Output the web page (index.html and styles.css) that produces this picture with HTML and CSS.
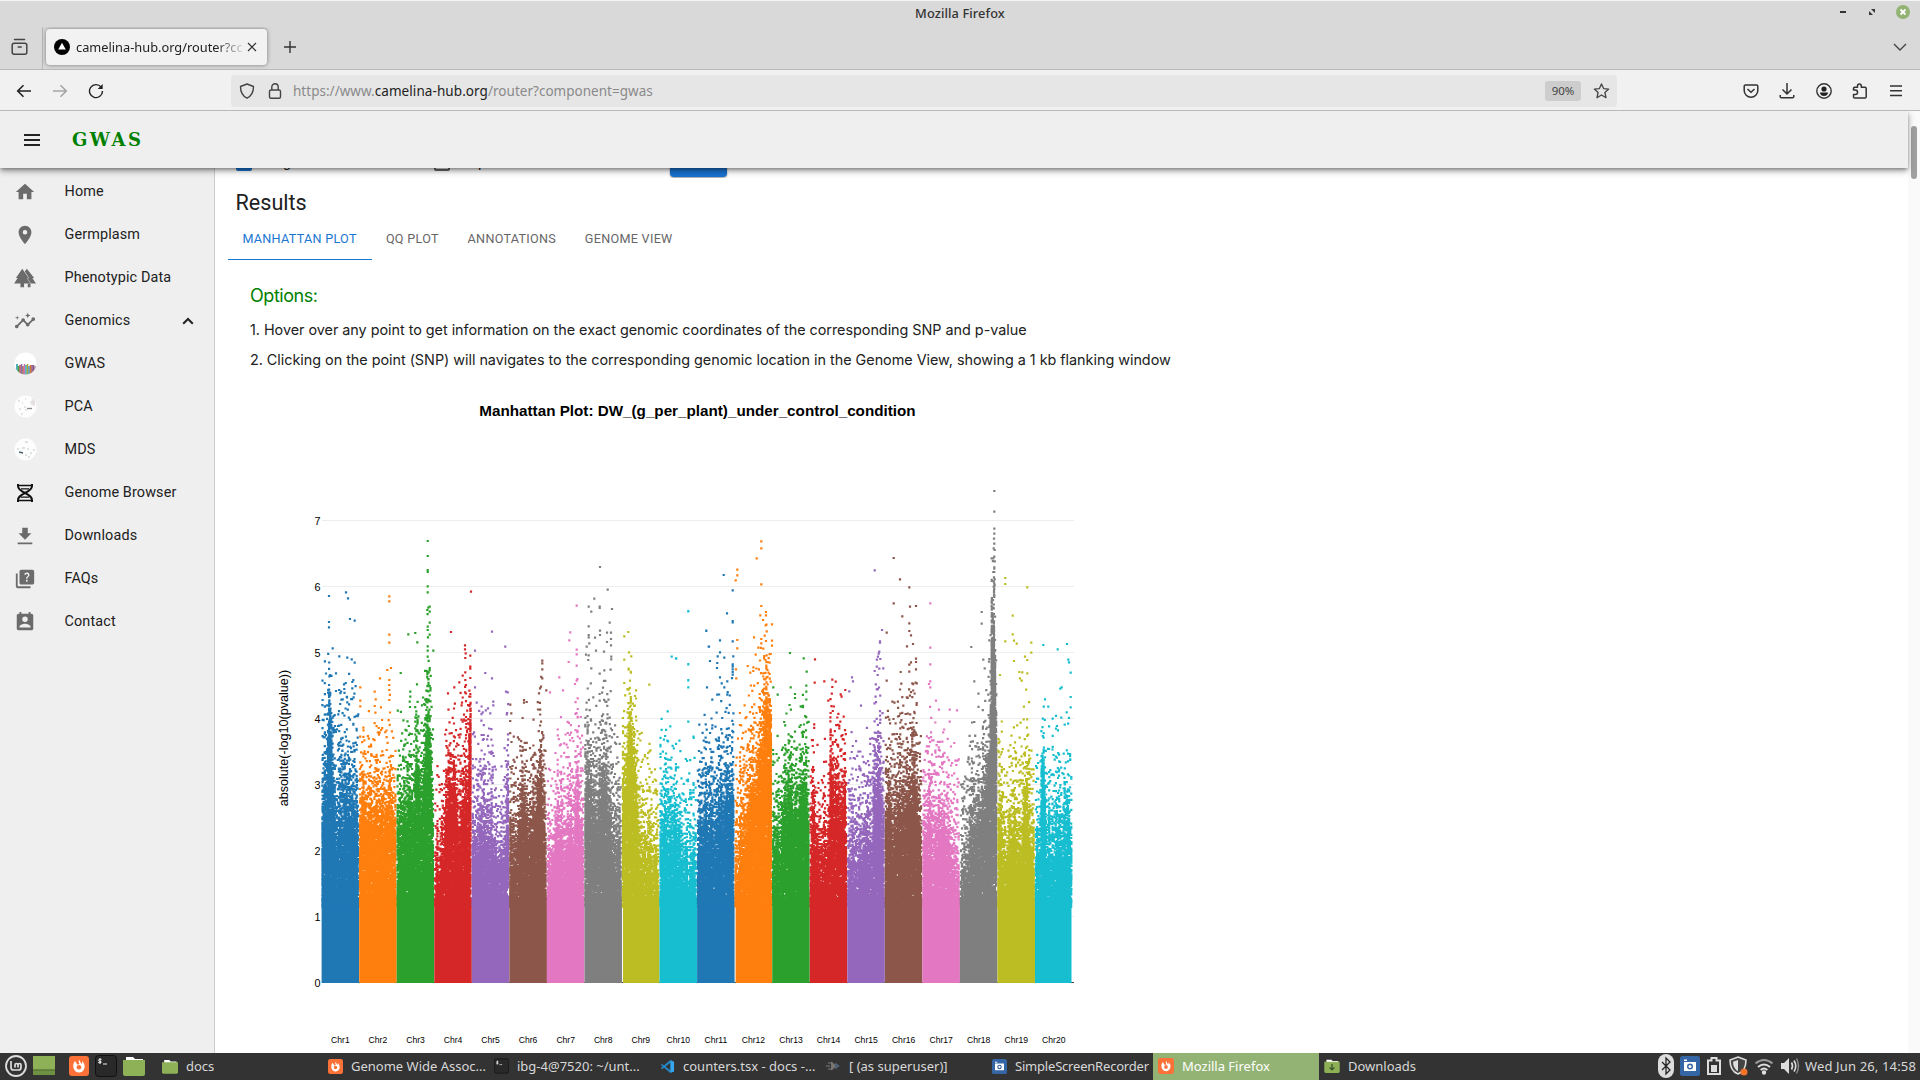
FILE: index.html
```html
<!DOCTYPE html>
<html lang="en">
<head>
<meta charset="utf-8">
<title>Mozilla Firefox</title>
<link rel="stylesheet" href="styles.css">
</head>
<body>
<div class="screen">
  <header class="titlebar">
    <span class="title">Mozilla Firefox</span>
    <div class="winbtns">
      <svg width="10" height="12" viewBox="0 0 10 12"><path d="M2 5h6v2H2z" fill="#333"/></svg>
      <svg width="10" height="12" viewBox="0 0 10 12"><path d="M4 3h4v4zM2 5v4h4z" fill="#333"/></svg>
      <svg width="14" height="14" viewBox="0 0 14 14"><circle cx="7" cy="7" r="7" fill="#92b372"/><path d="M4.5 4.5l5 5m0-5l-5 5" stroke="#fff" stroke-width="1.8"/></svg>
    </div>
  </header>
  <div class="tabbar">
    <div class="view"><svg width="18" height="18" viewBox="0 0 18 18" fill="none" stroke="#444" stroke-width="1.5" stroke-linecap="round"><rect x="1.2" y="5.2" width="14.6" height="11" rx="2"/><path d="M3.5 1.6h10M7.2 9h3"/></svg></div>
    <div class="tab">
      <svg width="16" height="16" viewBox="0 0 16 16"><circle cx="8" cy="8" r="8" fill="#000"/><path d="M8 3.8l3.8 6.7H4.2z" fill="#fff"/></svg>
      <span class="tabtext">camelina-hub.org/router?co</span>
      <svg class="close" width="10" height="10" viewBox="0 0 10 10"><path d="M1 1l8 8M9 1L1 9" stroke="#333" stroke-width="1.2"/></svg>
    </div>
    <svg class="plus" width="12" height="12" viewBox="0 0 12 12"><path d="M6 0v12M0 6h12" stroke="#333" stroke-width="1.4"/></svg>
    <svg class="chev" width="14" height="8" viewBox="0 0 14 8"><path d="M1 1l6 6 6-6" fill="none" stroke="#444" stroke-width="1.4"/></svg>
  </div>
  <div class="navbar">
    <div class="navleft">
      <svg width="16" height="16" viewBox="0 0 16 16" fill="none" stroke="#222" stroke-width="1.6"><path d="M15 8H2M7.5 2.2L1.7 8l5.8 5.8"/></svg>
      <svg width="16" height="16" viewBox="0 0 16 16" fill="none" stroke="#a5a5a5" stroke-width="1.6"><path d="M1 8h13M8.500 2.200L14.300 8l-5.800 5.800"/></svg>
      <svg width="16" height="16" viewBox="0 0 16 16" fill="none" stroke="#222" stroke-width="1.4"><path d="M13.200 4.200A6.500 6.500 0 1 0 14.500 8"/><path d="M14.700 1V6H9.700z" fill="#222" stroke="none"/></svg>
    </div>
    <div class="urlbar">
      <svg width="16" height="16" viewBox="0 0 16 16" fill="none" stroke="#444" stroke-width="1.4"><path d="M8 1L14.500 3.500C14.500 9 12.500 13 8 15.200 3.500 13 1.500 9 1.500 3.500z" stroke-linejoin="round"/></svg>
      <svg width="16" height="16" viewBox="0 0 16 16" fill="none" stroke="#444" stroke-width="1.4"><rect x="2.500" y="7" width="11" height="8.300" rx="1.500"/><path d="M4.800 7V4a3.200 3.200 0 0 1 6.400 0v3"/></svg>
      <span class="url">https://www.<b>camelina-hub.org</b>/router?component=gwas</span>
      <span class="zoom">90%</span>
      <svg width="17" height="16" viewBox="0 0 16 16" fill="none" stroke="#444" stroke-width="1.300" stroke-linejoin="round"><path d="M8 .9l2.100 4.700 5.100.5-3.800 3.400 1.100 5.200L8 12l-4.500 2.700 1.100-5.200L.8 6.100l5.100-.5z"/></svg>
    </div>
    <div class="navright">
      <svg width="16" height="16" viewBox="0 0 16 16" fill="none" stroke="#333" stroke-width="1.500"><path d="M2.500 2h11q1.300 0 1.300 1.300V7.500a6.800 6.800 0 0 1-13.600 0V3.300Q1.200 2 2.500 2z"/><path d="M4.500 6L8 9.300 11.500 6"/></svg>
      <svg width="16" height="16" viewBox="0 0 16 16" fill="none" stroke="#333" stroke-width="1.500"><path d="M8 0v11M3.500 6.500L8 11l4.500-4.500M1.200 12v1.500q0 1.300 1.300 1.300h11q1.300 0 1.300-1.300V12"/></svg>
      <svg width="16" height="16" viewBox="0 0 16 16"><circle cx="8" cy="8" r="7.200" fill="none" stroke="#333" stroke-width="1.400"/><circle cx="8" cy="6" r="2.600" fill="#222"/><path d="M3.800 9.500h8.400q-.8 3.500-4.200 3.500t-4.200-3.500z" fill="#222"/></svg>
      <svg width="16" height="16" viewBox="0 0 16 16" fill="none" stroke="#333" stroke-width="1.500" stroke-linejoin="round"><path d="M1.500 7V5.500q0-1.200 1.200-1.200h2.800V3a1.900 1.900 0 0 1 3.800 0v1.300H13q1.200 0 1.200 1.200v8.300q0 1.300-1.200 1.300H2.700q-1.200 0-1.200-1.300V11.500h1.800a2.200 2.200 0 0 0 0-4.500z"/></svg>
      <svg width="16" height="16" viewBox="0 0 16 16" stroke="#333" stroke-width="1.400"><path d="M2 3h12M2 7.700h12M2 12.500h12"/></svg>
    </div>
  </div>
  <div class="viewport">
    <div class="app">
      <div class="appbar">
        <svg width="18" height="14" viewBox="0 0 18 14"><path d="M1 2h16M1 7h16M1 12h16" stroke="#222" stroke-width="2"/></svg>
        <h1>GWAS</h1>
      </div>
      <div class="body">
        <nav class="side">
          <a><svg width="22" height="22" viewBox="0 0 24 24"><path d="M10 20v-6h4v6h5v-8h3L12 3 2 12h3v8z"/></svg>Home</a>
          <a><svg width="22" height="22" viewBox="0 0 24 24"><path d="M12 2C8.130 2 5 5.130 5 9c0 5.250 7 13 7 13s7-7.750 7-13c0-3.870-3.130-7-7-7zm0 9.500a2.500 2.500 0 0 1 0-5 2.500 2.500 0 0 1 0 5z"/></svg>Germplasm</a>
          <a><svg width="22" height="22" viewBox="0 0 24 24"><path d="M17 12h2L12 2 5.050 12H7l-3.900 6h6.920v4h3.960v-4H21l-4-6z" transform="translate(-3 0)"/><path d="M14 2l8 10h-2l4 6h-6v4h-3v-4h3.500l-4-6h2l-4.700-7z"/></svg>Phenotypic Data</a>
          <a><svg width="22" height="22" viewBox="0 0 24 24"><path d="M21 8c-1.450 0-2.260 1.440-1.930 2.510l-3.550 3.560c-.3-.09-.74-.09-1.040 0l-2.550-2.550C12.270 10.450 11.460 9 10 9c-1.450 0-2.270 1.440-1.930 2.520l-4.560 4.550C2.440 15.740 1 16.550 1 18c0 1.100.9 2 2 2 1.450 0 2.260-1.440 1.930-2.510l4.550-4.560c.3.090.74.090 1.040 0l2.550 2.550C12.730 16.550 13.540 18 15 18c1.450 0 2.270-1.440 1.930-2.520l3.560-3.550C21.560 12.260 23 11.450 23 10c0-1.100-.9-2-2-2z"/><path d="M15 9l.94-2.070L18 6l-2.060-.93L15 3l-.92 2.070L12 6l2.080.93zM3.500 11L4 9l2-.5L4 8l-.5-2L3 8l-2 .5L3 9z"/></svg>Genomics<svg class="up" width="12" height="8" viewBox="0 0 12 8"><path d="M1.200 6.800L6 2l4.800 4.800" fill="none" stroke="#222" stroke-width="2"/></svg></a>
          <a><svg class="round" width="23" height="23" viewBox="0 0 23 23"><defs><clipPath id="c"><circle cx="11.500" cy="11.500" r="11"/></clipPath></defs><g clip-path="url(#c)"><path d="M0 0h23v23H0z" fill="#fff"/><g stroke-width="1.500"><path d="M3 12v11" stroke="#1797a0"/><path d="M4.500 14v9" stroke="#4aa34a"/><path d="M6 13v10" stroke="#b04a4a"/><path d="M7.500 12v11" stroke="#8b6bb0"/><path d="M9 14v9" stroke="#a05a4a"/><path d="M10.500 12v11" stroke="#d070b0"/><path d="M12 13v10" stroke="#28a8b8"/><path d="M13.500 12v11" stroke="#a8a830"/><path d="M15 14v9" stroke="#408bc0"/><path d="M16.500 13v10" stroke="#d07830"/><path d="M18 13v10" stroke="#994a70"/><path d="M19.500 13v10" stroke="#735a90"/><path d="M21 14v9" stroke="#b080a0"/></g></g></svg>GWAS</a>
          <a><svg class="round" width="23" height="23" viewBox="0 0 23 23"><circle cx="11.500" cy="11.500" r="11" fill="#fdfdfd"/><path d="M4 6h2m2 2h1m2-4h1M5 14h2m3-2h2m-1 3h2m-6 4h2m7-12h2" stroke="#ccc"/><path d="M13 13.500h5" stroke="#888" stroke-width="1.300"/><path d="M18 3l3 3v5l-4-1z" fill="#e6dfdf"/></svg>PCA</a>
          <a><svg class="round" width="23" height="23" viewBox="0 0 23 23"><circle cx="11.500" cy="11.500" r="11" fill="#fdfdfd"/><path d="M11 4h3m-6 6h3m2 1h2m1 4h2m-4 4h2m-5-2h2m6-5h2M3 11h2" stroke="#bcc6cc"/><path d="M5 14l4 1" stroke="#4b5f6d" stroke-width="1.700"/></svg>MDS</a>
          <a><svg class="dna" width="18" height="20" viewBox="0 0 18 20" fill="none" stroke="#111" stroke-width="2"><path d="M2 1v2c0 7 14 7 14 14v2M16 1v2c0 7-14 7-14 14v2"/><path d="M3 2.500h12M5 5.800h8M5 14.200h8M3 17.500h12" stroke-width="1.300"/></svg>Genome Browser</a>
          <a><svg width="22" height="22" viewBox="0 0 24 24"><path d="M19 9h-4V3H9v6H5l7 7 7-7zM4 19v2h16v-2z"/></svg>Downloads</a>
          <a><svg width="22" height="22" viewBox="0 0 24 24"><path fill-rule="evenodd" d="M4 6H2v14c0 1.100.9 2 2 2h14v-2H4V6zm16-4H8c-1.100 0-2 .9-2 2v12c0 1.100.9 2 2 2h12c1.100 0 2-.9 2-2V4c0-1.100-.9-2-2-2zm-5.990 13c-.59 0-1.050-.47-1.050-1.050 0-.59.47-1.040 1.050-1.040.59 0 1.040.45 1.040 1.040-.01.580-.450 1.050-1.040 1.050zm2.500-6.170c-.63.930-1.230 1.210-1.560 1.810-.13.240-.18.400-.18 1.180h-1.520c0-.41-.06-1.080.26-1.650.41-.73 1.180-1.160 1.630-1.800.48-.68.210-1.940-1.140-1.940-.88 0-1.320.67-1.500 1.230l-1.370-.57C11.510 5.960 12.520 5 13.990 5c1.230 0 2.080.56 2.510 1.260.37.6.58 1.730.01 2.570z"/></svg>FAQs</a>
          <a><svg width="22" height="22" viewBox="0 0 24 24"><path fill-rule="evenodd" d="M19 3h-1V1h-2v2H8V1H6v2H5c-1.110 0-2 .9-2 2v14c0 1.100.89 2 2 2h14c1.100 0 2-.9 2-2V5c0-1.100-.9-2-2-2zm-7 3a3 3 0 0 1 0 6 3 3 0 0 1 0-6zm6 12H6v-1c0-2 4-3.100 6-3.100s6 1.100 6 3.100z"/></svg>Contact</a>
        </nav>
        <main class="content">
          <div class="peek"><i class="cb on"></i><span class="t1">g</span><i class="cb"></i><span class="t2">p</span><i class="btn"></i></div>
          <h2>Results</h2>
          <div class="tabs"><span class="active">MANHATTAN PLOT</span><span>QQ PLOT</span><span>ANNOTATIONS</span><span>GENOME VIEW</span></div>
          <div class="options">
            <h3>Options:</h3>
            <p>1. Hover over any point to get information on the exact genomic coordinates of the corresponding SNP and p-value</p>
            <p>2. Clicking on the point (SNP) will navigates to the corresponding genomic location in the Genome View, showing a 1 kb flanking window</p>
          </div>
          <svg id="plot" class="plot" width="860" height="667" viewBox="250 386 860 667"></svg>
        </main>
      </div>
    </div>
    <div class="scroll"><i></i></div>
  </div>
  <footer class="taskbar">
    <div class="launch">
      <svg width="22" height="22" viewBox="0 0 22 22" fill="none" stroke="#ddd"><circle cx="11" cy="11" r="10" stroke-width="1.800"/><path d="M6 6v6.500q0 2.500 2.500 2.500h5q2.500 0 2.500-2.500V10q0-1.500-1.500-1.500T13 10v2.500M13 10q0-1.500-1.500-1.500T10 10v2.500" stroke-width="1.700"/></svg>
      <svg class="desk" width="22" height="20" viewBox="0 0 22 20"><path d="M0 0h22v19H0z" fill="#8eb158"/><path d="M0 14.500h22V19H0z" fill="#6f9142"/><path d="M0 14h22" stroke="#42582a"/></svg>
      <svg class="ff" width="20" height="20" viewBox="0 0 20 20"><use href="#fox"/></svg>
      <svg width="22" height="22" viewBox="0 0 22 22"><use href="#term"/></svg>
      <svg width="22" height="20" viewBox="0 0 22 20"><use href="#fold"/></svg>
    </div>
    <div class="task"><svg width="16" height="15" viewBox="0 0 22 20"><use href="#fold"/></svg><span>docs</span></div>
    <div class="task"><svg width="15" height="15" viewBox="0 0 20 20"><use href="#fox"/></svg><span>Genome Wide Assoc...</span></div>
    <div class="task"><svg width="15" height="16" viewBox="0 0 22 22"><use href="#term"/></svg><span>ibg-4@7520: ~/unt...</span></div>
    <div class="task"><svg width="15" height="15" viewBox="0 0 16 16"><path d="M11 1v14L1 6.500l1.200-1.300L11 12V4L2.200 10.800 1 9.500z" fill="#2489ca"/><path d="M11 1l4 1.800v10.400L11 15z" fill="#35a6f0"/></svg><span>counters.tsx - docs -...</span></div>
    <div class="task"><svg width="15" height="14" viewBox="0 0 15 14"><path d="M0 7h4M2 4h5M2 10h5" stroke="#666" stroke-width="1.500"/><path d="M5 2.500l4 3v3l-4 3z" fill="#7b7572"/><path d="M9 3.500l5 3.500-5 3.500z" fill="#4e6176"/></svg><span>[ (as superuser)]</span></div>
    <div class="task"><svg width="15" height="15" viewBox="0 0 20 20"><use href="#cam"/></svg><span class="tight">SimpleScreenRecorder</span></div>
    <div class="task on"><svg width="16" height="16" viewBox="0 0 20 20"><use href="#fox"/></svg><span>Mozilla Firefox</span></div>
    <div class="task"><svg width="16" height="14" viewBox="0 0 22 20"><use href="#fold"/><path d="M11 7v8M7.500 12l3.500 3.500 3.500-3.500" stroke="#40592b" fill="none" stroke-width="2"/></svg><span>Downloads</span></div>
    <div class="tray">
      <svg width="16" height="24" viewBox="0 0 16 24"><rect width="16" height="24" rx="8" fill="#ddd"/><path d="M4 8l8 8-4 4V4l4 4-8 8" fill="none" stroke="#222" stroke-width="1.300"/></svg>
      <svg width="20" height="20" viewBox="0 0 20 20"><use href="#cam"/></svg>
      <svg width="16" height="20" viewBox="0 0 16 20"><path d="M5.500 2h5v2.500H14V18H2V4.500h3.500z" fill="none" stroke="#ddd" stroke-width="2"/><path d="M5 9h6v7H5z" fill="#ddd"/></svg>
      <svg width="20" height="20" viewBox="0 0 20 20"><path d="M10 1l8 3q0 11-8 14Q2 15 2 4z" fill="#444" stroke="#ddd" stroke-width="1.600"/><path d="M10 4l-5 1.800q0 6.500 5 9.500z" fill="#ddd"/><circle cx="16" cy="16" r="3.500" fill="#f37329"/></svg>
      <svg width="20" height="18" viewBox="0 0 20 18" fill="none" stroke="#ddd" stroke-width="2"><path d="M1.500 6.500q8.500-7 17 0" stroke="#999"/><path d="M4 10q6-5 12 0M6.700 13q3.300-3 6.600 0"/><circle cx="10" cy="15.500" r="1.200" fill="#ddd"/></svg>
      <svg width="20" height="18" viewBox="0 0 20 18"><path d="M1 6h3l5-5v16l-5-5H1z" fill="#ddd"/><path d="M11.500 5.500q2 3.500 0 7M14 3.500q3.500 5.500 0 11" stroke="#ddd" stroke-width="1.600" fill="none"/><path d="M16.500 1.500q4 7.500 0 15" stroke="#888" stroke-width="1.500" fill="none"/></svg>
      <span class="clock">Wed Jun 26, 14:58</span>
    </div>
  </footer>
</div>
<svg class="defs" width="0" height="0"><defs>
  <g id="fox"><rect width="20" height="20" rx="3" fill="#fb7137"/><path d="M6 5Q3.500 8 4.500 12q1.500 4.500 5.500 4.500t5.500-4.500Q16.300 8 13 5q.5 2-.5 3L10 3.500Q9 6 10.500 8l-2 .8z" fill="#fff"/><circle cx="10" cy="11.200" r="2.300" fill="#fb7137"/></g>
  <g id="term"><rect x=".5" y=".5" width="21" height="21" rx="3" fill="#292929" stroke="#111"/><path d="M6.500 4.500q-3-.8-3 .7t2.500 1.300q1.500 1.700-2.800 1.100M5 3v6M8 9h4" stroke="#eee" fill="none"/></g>
  <g id="fold"><path d="M3 1h7l2 2h8v4H3z" fill="#fff"/><path d="M0 4h22v14q0 2-2 2H2q-2 0-2-2z" fill="#8eb158"/></g>
  <g id="cam"><rect width="20" height="20" rx="2.500" fill="#3465a4"/><path d="M4 6h12v9H4zM4 3.500h3V5H4z" fill="#fff"/><circle cx="10" cy="10.500" r="3" fill="#3465a4"/><circle cx="10" cy="10.500" r="1.500" fill="#fff"/></g>
</defs></svg>
<script src="plot.js"></script>
</body>
</html>
```
FILE: styles.css
```css
* { box-sizing: border-box; }
body { margin: 0; overflow: hidden; background: #fff; font-family: "Roboto", sans-serif; }
svg { flex: none; display: block; }
.defs { position: absolute; }
.screen { width: 1920px; height: 1080px; display: flex; flex-direction: column; }
.titlebar { height: 27px; background: #d9d9d9; border-top: 1px solid #f4f4f4; display: flex; align-items: center; justify-content: center; position: relative; font: 500 12.8px "Noto Sans", sans-serif; letter-spacing: .1px; color: #333; padding-bottom: 2px; }
.winbtns { position: absolute; right: 10px; top: 4px; display: flex; gap: 19px; align-items: center; }
.tabbar { height: 42px; background: #d9d9d9; display: flex; align-items: center; font-family: "Noto Sans", sans-serif; padding-bottom: 2px; }
.view { width: 43px; height: 44px; border-right: 1px solid #b6b6b6; padding: 13px 0 0 11px; }
.tab { margin-left: 3px; width: 221px; height: 36px; background: #f2f2f2; border-radius: 4px; box-shadow: 0 0 4px rgba(0,0,0,.45); display: flex; align-items: center; padding-left: 8px; font-size: 12.8px; letter-spacing: 0; color: #222; }
.tabtext { margin-left: 6px; width: 166px; overflow: hidden; white-space: nowrap; -webkit-mask-image: linear-gradient(90deg,#000 84%,rgba(0,0,0,.15)); mask-image: linear-gradient(90deg,#000 84%,rgba(0,0,0,.15)); }
.close { margin-left: 5px; }
.plus { margin-left: 17px; }
.chev { margin-left: auto; margin-right: 13px; }
.navbar { height: 42px; background: #f1f1f1; border-top: 1px solid #b9b9b9; border-bottom: 1px solid #b9b9b9; display: flex; align-items: center; font-family: "Noto Sans", sans-serif; padding-top: 1px; }
.navleft { display: flex; gap: 20px; padding-left: 16px; width: 231px; }
.urlbar { width: 1386px; height: 32px; border-radius: 4px; background: #e6e6e6; display: flex; align-items: center; gap: 12px; padding: 0 7px 0 8px; }
.url { font-size: 13.500px; color: #8a8a8a; margin-left: -2px; letter-spacing: .020px; }
.url b { font-weight: 400; color: #222; letter-spacing: .080px; }
.zoom { margin-left: auto; width: 36px; height: 20px; border-radius: 3px; background: #cdcdcd; font-size: 11.500px; line-height: 20px; text-align: center; color: #444; }
.navright { display: flex; gap: 20.200px; margin-left: auto; margin-right: 16px; }
.viewport { height: 942px; display: flex; overflow: hidden; }
.app { width: 1908px; display: flex; flex-direction: column; }
.appbar { height: 57px; background: #efefef; box-shadow: 0 2px 4px -1px rgba(0,0,0,.4), 0 4px 6px rgba(0,0,0,.2), 0 1px 9px rgba(0,0,0,.12); display: flex; align-items: center; padding-left: 23px; position: relative; z-index: 1; flex: none; }
.appbar h1 { margin: 0 0 0 31px; font: bold 18px "DejaVu Serif", serif; letter-spacing: 2.500px; color: #008000; }
.scroll { width: 12px; background: #fafafa; padding: 15px 0 0 3px; }
.scroll i { display: block; width: 6px; height: 53px; border-radius: 3px; background: #a0a0a0; }
.body { display: flex; flex: 1; min-height: 0; }
.side { width: 215px; background: #efefef; border-right: 1px solid #ccc; padding-top: 2px; flex: none; }
.side a { height: 43px; display: grid; grid-template-columns: 50.500px 1fr auto; align-items: center; padding-left: 14px; font-size: 14.400px; letter-spacing: .135px; color: #212121; }
.side a > svg { fill: #6b6b6b; }
.side a > svg.dna { fill: none; margin-left: 2px; }
.side a > svg.up { margin-right: 20px; }
.content { flex: 1; min-width: 0; overflow: hidden; color: #212121; }
.peek { height: 10px; display: flex; padding-left: 21px; overflow: hidden; font-size: 14.400px; }
.cb { width: 16px; height: 16px; margin-top: -13px; border: 2px solid #666; border-radius: 2px; flex: none; }
.cb.on { background: #1976d2; border-color: #1976d2; }
.t1 { margin: -14px 0 0 31px; width: 151px; line-height: 17px; }
.t2 { margin: -14px 0 0 28px; width: 192px; line-height: 17px; }
.peek .btn { width: 57px; height: 30px; margin-top: -21px; border-radius: 4px; background: #1a73d1; box-shadow: 0 1px 2px rgba(0,0,0,.4); }
h2 { margin: 10px 0 0 20.500px; font-size: 21.600px; line-height: 29px; font-weight: 400; }
.tabs { display: flex; margin: 0 0 0 13px; height: 43px; }
.tabs span { padding: 0 14.400px; line-height: 43px; font-size: 12.600px; letter-spacing: .300px; color: #666; }
.tabs .active { color: #1976d2; border-bottom: 1px solid #1976d2; width: 143.500px; white-space: nowrap; }
.options { padding: 21px 0 0 35px; font-family: "Inter", sans-serif; height: 126px; }
.options h3 { margin: 0; font-weight: 400; font-size: 18px; line-height: 29px; color: #008000; letter-spacing: -.450px; }
.options p { margin: 7px 0 0; font-size: 14.400px; line-height: 26px; white-space: nowrap; letter-spacing: -.032px; }
.options p + p { margin-top: 4px; }
.plot { margin-left: 35px; font-family: "Liberation Sans", sans-serif; }
.ptitle { font-size: 15.230px; font-weight: bold; }
.ytitle { font-size: 12.600px; }
.ytick { font-size: 10.800px; }
.xtick { font-size: 8.600px; }
.taskbar { height: 27px; background: #333; display: flex; align-items: center; font-family: "Noto Sans", sans-serif; font-size: 13px; color: #d8d8d8; padding-bottom: 1px; }
.launch { width: 157px; display: flex; align-items: center; padding-left: 5px; gap: 6px; }
.launch .ff { margin-left: 8px; }
.task { width: 166px; height: 27px; display: flex; align-items: center; gap: 8px; padding-left: 5px; white-space: nowrap; overflow: hidden; flex: none; }
.task .tight { letter-spacing: -.200px; }
.task.on { background: #93b374; color: #fff; }
.tray { margin-left: auto; display: flex; align-items: center; gap: 6px; padding-right: 4px; }
.clock { margin-left: -1px; white-space: nowrap; letter-spacing: .150px; }
```
FILE: plot.js
```js
// Manhattan plot: 20 chromosomes, y axis is |log10(p)|.
const X0 = 321.6, W = 37.55, Y0 = 983, U = 66;
const COLORS = ['#1f77b4', '#ff7f0e', '#2ca02c', '#d62728', '#9467bd', '#8c564b', '#e377c2', '#7f7f7f', '#bcbd22', '#17becf'];

// Per chromosome: [offset, level where points merge, level where they thin out]
const PROFILE = [
  [[0,2.6,4.2],[4,3,4.8],[6,3.2,4.8],[7,4.6,5.1],[9,4.4,5],[11,3.2,4.2],[14,2.3,4],[22,2.7,4.4],[32,2.6,4.3],[37,2.3,4.1]],
  [[0,2.5,3.9],[5,2.8,3.9],[12,2.4,3.8],[20,2.7,4],[28,2.6,3.7],[30,3,4.6],[32,2.5,3.8],[37,2.3,3.7]],
  [[0,2.3,3.6],[10,2.5,4.1],[17,2.8,4],[20,3.5,4.5],[24,2.6,3.8],[28,3.2,4.5],[31,3.8,5.2],[33,3.8,5],[35,2.8,4.2],[37,2.3,3.6]],
  [[0,1.4,2.9],[8,2,3.1],[12,2.6,4],[17,3.2,4.2],[20,3,4.2],[25,2.2,3.9],[31,2.9,4.6],[34,2.7,4.2],[36,4.2,4.6],[37.4,3.6,4.3]],
  [[0,2.2,3.6],[10,2.1,3.9],[20,2.1,3.7],[25,2,3],[30,1.8,2.9],[34,2.2,3.7],[36,2.8,4],[37,2.6,3.8]],
  [[0,2.1,3.9],[6,1.9,3.2],[10,2.2,3.5],[14,3.1,3.9],[17,2.5,3.5],[26,2.5,3.6],[30,2.7,3.9],[32,3.5,4.6],[34,2.7,3.9],[37,2.3,3.7]],
  [[0,2,3.8],[6,1.9,3.1],[14,2.5,4],[18,2,3.6],[23,2.5,4.2],[26,2,3.5],[30,3,4.4],[34,2.3,4],[37,2.3,3.6]],
  [[0,2.4,4.3],[3,3.5,4.5],[8,2.5,4],[12,2.4,3.9],[18,3,4.5],[22,2.9,4.4],[26,2.6,4.6],[31,1.8,3.8],[35,2.3,3.9],[36,2.2,3.6]],
  [[0,2.6,4],[5,3.4,4.4],[8,3.9,4.6],[13,3,4.1],[18,2.1,3.7],[25,1.9,3.3],[37,1.7,3.1]],
  [[0,2.3,3.8],[6,2.5,3.8],[12,2.2,3.5],[17,2.3,3.4],[24,1.8,3],[28,1.7,3.2],[37,1.8,3.4]],
  [[0,2.3,3.6],[8,2.4,3.9],[16,2.3,3.9],[22,2.5,4.1],[30,2.7,4.1],[34,2.7,4],[35.5,3.2,4.8],[37,2.7,3.9]],
  [[1,1.8,3.6],[8,2.3,4],[15,2.7,4.3],[22,3,4.5],[27,3.7,4.9],[32,4.2,5.2],[35,4.2,4.8],[37,3.5,4.8]],
  [[0,2,3.6],[8,2.1,3.4],[13,2.9,4],[20,2.7,3.9],[27,2.6,3.6],[30,2.9,4.2],[34,3,4.3],[37,2.5,3.8]],
  [[0,1.7,3.7],[4,2.7,3.8],[8,1.9,3.2],[16,2,3.4],[19,2.2,3.6],[21.5,3.5,4.5],[24,2.5,4.2],[30,2.5,3.9],[34,3.1,4.2],[37,2.3,3.6]],
  [[0,1.8,3.4],[12,1.9,3.7],[17,2,3.2],[21,2,3.9],[24,2.1,3.5],[27,3,4.5],[31,3,4.6],[34,2.7,4.3],[37,2.2,3.6]],
  [[0,2.6,3.9],[8,2.5,4.1],[15,2.5,4.1],[22,2.8,4.2],[26,2.6,4.3],[30,3,4.7],[34,2.6,3.9],[37,2.2,3.8]],
  [[0,2,3.5],[7,2.7,4.3],[11,2,3.8],[18,2.4,3.7],[24,2.2,3.5],[30,1.8,3.5],[37,1.5,3]],
  [[0,1.5,3.2],[6,1.8,3.3],[12,2.3,4],[20,2.6,4],[28,3,4.3],[30,3.3,4.4],[31.6,5.5,6.6],[34,5.5,6],[35.500,4.500,5.600],[37.500,3,4.200]],
  [[0,2.6,4.2],[5,2.3,3.8],[11,1.9,3.3],[17,2.3,4],[24,2.2,3.9],[29,2.8,4.4],[34,2.2,3.8],[37,2,3.8]],
  [[0,1.7,3.2],[5,1.9,3.4],[7,3.6,4.1],[9,3.3,4],[10.500,2.2,3.6],[18,2,3.6],[28,2.1,3.4],[34,2.3,4],[36.500,2,3.7]]
];

// Individually placed high points, in thirds of a pixel from each region's origin.
const HIGH = [
  { ox: 260, oy: 380, pts: '207,648 258,637 264,655 207,726 207,742 270,717 284,722 218,805 238,829 262,833 275,838 284,848 228,880 252,913 277,906 277,925 228,933 253,927 248,958 262,967 235,1003 295,1003 388,649 388,664 388,764 388,788 382,870 393,864 360,895 388,900 301,922 344,935 301,962 347,958 301,979 344,978 363,982 388,915 388,930 388,960 503,483 503,528 503,570 503,576 503,619 503,637 505,683 509,680 502,690 509,695 509,728 503,740 503,750 509,764 504,772 445,763 466,759 472,787 503,799 520,812 422,879 503,812 503,830 471,913 451,935 451,950 449,965 633,635 573,756 615,796 615,808 617,820 616,834 631,827 631,860 631,866 616,877 598,907 583,922 564,940 616,900 606,968 696,755 736,800 645,812 676,879 696,895 645,922 738,935 743,937 700,965 700,976 650,968 691,1000 847,842 847,850 847,868 847,895 843,920 859,931 837,940 792,960 800,966 792,968 754,1000 950,677 931,757 928,781 950,809 950,823 926,846 950,857 898,892 950,902 945,912 870,937 909,931 1020,561 1043,629 1003,656 986,680 994,695 1019,680 1019,684 1056,687 1049,728 986,739 1020,752 1020,765 1005,773 1041,758 1053,758 1053,777 1041,786 1053,796 986,765 986,772 988,790 980,800 1008,812 1032,815 1054,830 1054,838 978,824 985,840 986,826 994,865 1019,881 1105,756 1093,769 1107,817 1114,829 1093,839 1168,914 1110,902 1093,909 1125,948 1235,830 1249,835' },
  { ox: 300, oy: 560, pts: '1165,154 1165,312 1165,360 1165,382 1165,485 1103,454 1219,212 1227,260 1230,303 1221,382' },
  { ox: 670, oy: 470, pts: '161,315 188,361 171,430 188,453 188,457 188,514 109,483 150,511 116,530 150,547 143,559 163,563 190,559 120,573 142,579 141,594 188,583 188,590 188,598 188,606 188,614 150,622 172,634 155,640 111,652 163,652 172,674 142,674 202,299 202,316 197,331 274,214 274,235 260,265 274,343 274,408 288,426 271,436 288,436 279,450 287,466 290,484 306,463 252,502 306,512 306,527 202,510 202,535 274,507 274,520 284,497 288,513 265,533 257,554 233,588 241,608 198,598 199,625 250,603 360,549 401,565 410,605 409,647 409,665 362,652 310,652 323,674 375,672 375,684 435,568 434,638 463,634 487,629 497,635 487,651 526,660 512,673 475,692 614,301 636,480 630,514 630,518 628,545 626,551 631,567 614,603 623,615 628,596 640,595 546,622 549,634 538,664 573,707 671,264 690,328 718,352 671,400 720,410 738,408 697,439 718,460 650,488 718,483 723,496 711,529 729,522 738,566 723,577 718,584 738,576 738,598 718,605 692,606 650,632 694,641 781,400 781,533 781,583 781,634 777,642 781,652 798,692 839,719 861,721 839,755 973,63 973,125 973,176 973,191 972,206 973,221 971,235 974,240 973,260 970,265 974,274 973,292 973,296 970,306 973,306 972,322 974,328 971,334 973,341 974,346 971,350 973,356 972,362 972,368 973,375 973,381 935,426 935,461 904,531 958,511 940,569 958,567 957,575 944,595 913,634 1006,324 1006,342 1072,352 1028,437 1028,493 1006,514 1032,512 1040,521 1084,518 1084,548 1032,573 1065,560 1072,570 1048,606 1057,607 1072,610 1050,625 1055,632 990,615 1120,525 1163,538 1191,522 1195,569 1197,577 1202,608 1175,652 1171,656 1202,681 1125,688 1135,710 1202,712 1148,746 1174,743 55,423 5,560 18,566 55,583 55,631 55,652' }
];

let seed = 20240626;
function rnd() {
  seed = (seed * 1664525 + 1013904223) >>> 0;
  return seed / 4294967296;
}
function levels(profile, x) {
  let i = 1;
  while (i < profile.length - 1 && profile[i][0] < x) i++;
  const a = profile[i - 1], b = profile[i];
  const t = Math.min(1, Math.max(0, (x - a[0]) / (b[0] - a[0])));
  return [a[1] + (b[1] - a[1]) * t, a[2] + (b[2] - a[2]) * t];
}
const dot = (x, y) => 'M' + (x - 1.1).toFixed(1) + ' ' + y.toFixed(1) + 'h2.2';

const paths = PROFILE.map(() => '');
PROFILE.forEach((profile, c) => {
  for (let x = 1; x < W - 0.8; x += 1.1) {
    const [s0, t0] = levels(profile, x);
    const wob = (rnd() - 0.6) * 0.9;
    const s = s0 + wob * 0.7, top = t0 + wob * 0.6;
    const k = Math.log(40) / Math.max(0.35, top - s);
    let y = 1.15;
    while (y < top + 0.3) {
      const d = Math.min(85, 40 * Math.exp(-k * (y - s)));
      y += -Math.log(1 - rnd()) / d;
      if (y < top + 0.3) paths[c] += dot(X0 + c * W + x + (rnd() - 0.5) * 0.4, Y0 - y * U);
    }
  }
});
HIGH.forEach(({ ox, oy, pts }) => pts.split(' ').forEach(p => {
  const [px, py] = p.split(',').map(Number);
  const x = ox + px / 3, y = oy + py / 3;
  paths[Math.min(19, Math.max(0, Math.floor((x - X0) / W)))] += dot(x, y);
}));

let out = '<text class="ptitle" x="697.500" y="416" text-anchor="middle">Manhattan Plot: DW_(g_per_plant)_under_control_condition</text>';
out += '<text class="ytitle" text-anchor="middle" transform="translate(288 738) rotate(-90)">absolute(-log10(pvalue))</text>';
for (let v = 0; v <= 7; v++) {
  const y = Math.round(Y0 - v * U);
  out += `<text class="ytick" x="320.500" y="${y + 3.5}" text-anchor="end">${v}</text>`;
  out += `<path d="M322 ${y - 0.5}H1074" stroke="${v ? '#eee' : '#444'}"/>`;
}
paths.forEach((d, c) => {
  const x = X0 + c * W, gap = c === 8 || c === 11 ? 1 : 0, color = COLORS[c % 10];
  out += `<rect x="${(x + gap).toFixed(1)}" y="${Y0 - 1.3 * U}" width="${(W - gap - (c === 19 ? 1 : 0)).toFixed(1)}" height="${1.3 * U}" fill="${color}"/>`;
  out += `<path d="${d}" stroke="${color}" stroke-width="2.2"/>`;
  out += `<text class="xtick" x="${(x + W / 2).toFixed(1)}" y="1043" text-anchor="middle">Chr${c + 1}</text>`;
});
document.getElementById('plot').innerHTML = out;
```
